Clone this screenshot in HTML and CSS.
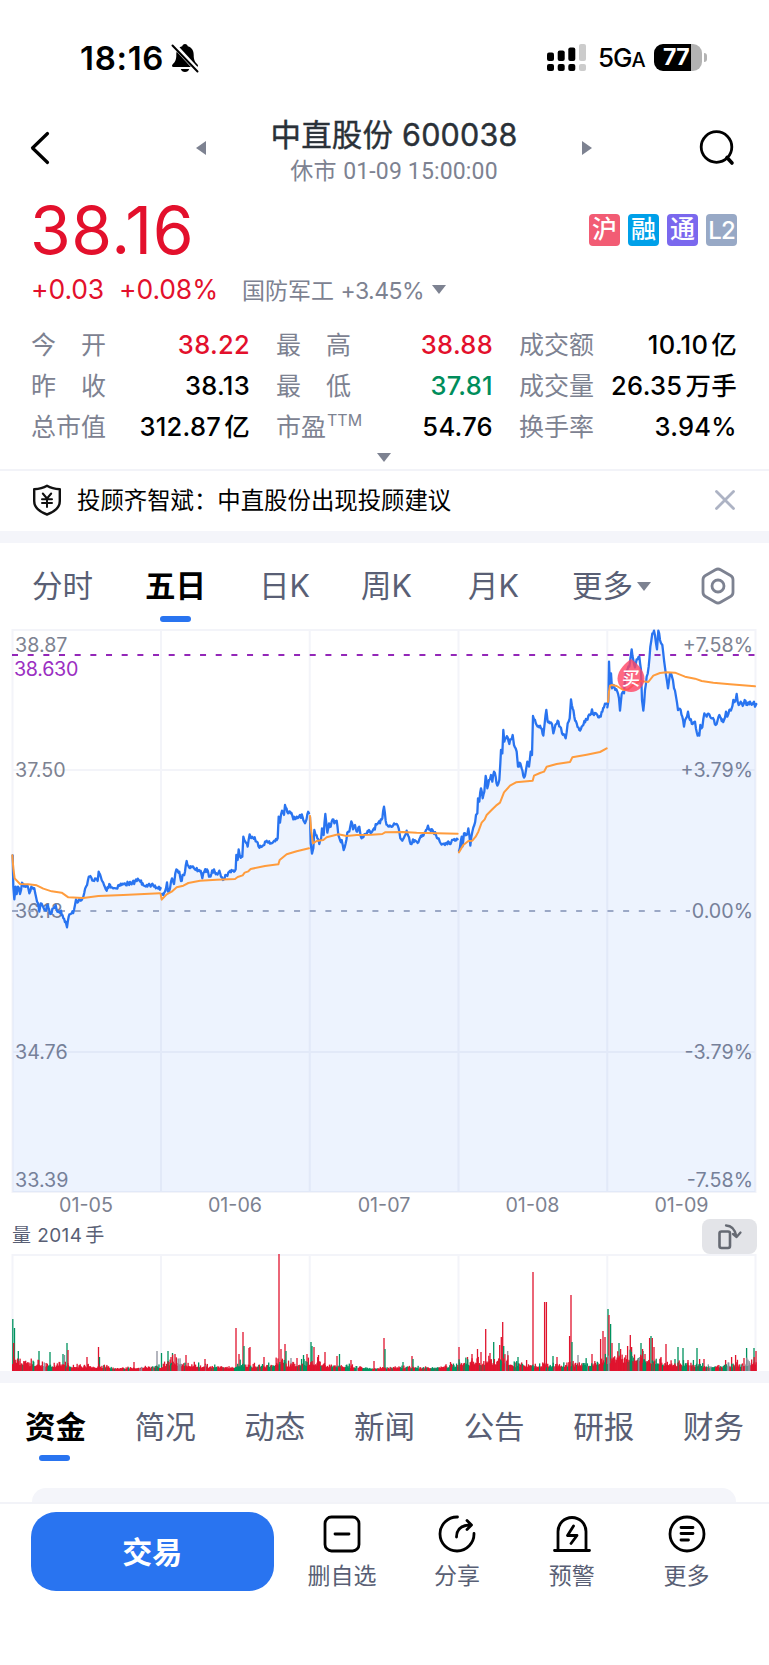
FILE: index.html
```html
<!DOCTYPE html>
<html lang="zh-CN">
<head>
    <meta charset="UTF-8">
    <meta name="viewport" content="width=device-width, initial-scale=1.0">
    <title>中直股份 600038</title>
    <link rel="stylesheet" href="styles.css">
</head>
<body>

    <div class="status-bar">
        <span class="clock">18:16</span>
        <svg class="bell" width="28" height="30" viewBox="0 0 28 30">
            <path d="M14 1c-1.600 0-2.600 1-2.800 2.300C7 4.500 5.300 8 5.300 12c0 5-1.300 7-3.800 9.500-1 1.200-.5 2.500 1 2.500h23c1.500 0 2-1.300 1-2.500C24 19 22.700 17 22.700 12c0-4-1.700-7.500-5.900-8.700C16.600 2 15.600 1 14 1z"/>
            <path d="M9.800 26h8.400c-.5 1.900-2.200 3-4.200 3s-3.700-1.100-4.200-3z"/>
            <path d="M2.500 1.500L27 28" stroke="#fff" stroke-width="5"/>
            <path d="M1.500 2.500L26.500 28.500" stroke="#000" stroke-width="2" stroke-linecap="round"/>
        </svg>
        <svg class="signal" width="40" height="28" viewBox="0 0 40 28">
            <rect x="0" y="8.500" width="7" height="8.500" rx="2"/>
            <rect x="10.700" y="6.500" width="7" height="10.500" rx="2"/>
            <rect x="21.300" y="3.500" width="7" height="13.500" rx="2"/>
            <rect x="32" y="0" width="7" height="17" rx="2" fill="#ccc"/>
            <rect x="0" y="20" width="7" height="7" rx="2"/>
            <rect x="10.700" y="20" width="7" height="7" rx="2"/>
            <rect x="21.300" y="20" width="7" height="7" rx="2"/>
            <rect x="32" y="20" width="7" height="7" rx="2" fill="#ccc"/>
        </svg>
        <span class="network">5G<small>A</small></span>
        <div class="battery"><span>77</span></div>
        <i class="battery-tip"></i>
    </div>

    <div class="header">
        <svg class="back" width="20" height="34" viewBox="0 0 20 34"><path d="M17.500 2.500L2.500 17l15 14.500" fill="none" stroke="#000" stroke-width="3.200" stroke-linecap="round" stroke-linejoin="round"/></svg>
        <svg class="prev" width="10" height="14" viewBox="0 0 10 14"><path d="M10 0v14L0 7z" fill="#7d8291"/></svg>
        <div class="title">
            <h1>中直股份 600038</h1>
            <p>休市 <span>01-09 15:00:00</span></p>
        </div>
        <svg class="next" width="10" height="14" viewBox="0 0 10 14"><path d="M0 0v14l10-7z" fill="#7d8291"/></svg>
        <svg class="search" width="38" height="38" viewBox="0 0 38 38" fill="none" stroke="#000" stroke-width="2.800" stroke-linecap="round"><circle cx="17.500" cy="18" r="15.300"/><path d="M28 28.500l5 5.500" stroke-width="3.600"/></svg>
    </div>

    <div class="quote">
        <div class="price-row">
            <span class="price">38.16</span>
            <div class="tags">
                <span class="tag hu">沪</span>
                <span class="tag rong">融</span>
                <span class="tag tong">通</span>
                <span class="tag l2">L2</span>
            </div>
        </div>
        <div class="change-row">
            <span class="change">+0.03</span>
            <span class="change percent">+0.08%</span>
            <span class="sector">国防军工 <em>+3.45%</em></span>
            <i class="arrow-down"></i>
        </div>
        <div class="stats">
            <div><span>今<b></b>开</span><strong class="up">38.22</strong></div>
            <div><span>最<b></b>高</span><strong class="up">38.88</strong></div>
            <div><span>成交额</span><strong>10.10<u>亿</u></strong></div>
            <div><span>昨<b></b>收</span><strong>38.13</strong></div>
            <div><span>最<b></b>低</span><strong class="down">37.81</strong></div>
            <div><span>成交量</span><strong>26.35<u>万手</u></strong></div>
            <div><span>总市值</span><strong>312.87<u>亿</u></strong></div>
            <div><span>市盈<sup>TTM</sup></span><strong>54.76</strong></div>
            <div><span>换手率</span><strong>3.94%</strong></div>
        </div>
        <i class="arrow-down expand"></i>
    </div>

    <div class="notice">
        <svg width="30" height="32" viewBox="0 0 30 32" fill="none" stroke="#111" stroke-width="2.400" stroke-linejoin="round" stroke-linecap="round">
            <path d="M15 1.800C19 4.200 23 5 27.800 5.200V17c0 6-4.500 10.500-12.800 13.500C6.700 27.500 2.200 23 2.200 17V5.200C7 5 11 4.200 15 1.800z"/>
            <path d="M10.800 9.500l4.200 5 4.200-5M10 15.200h10M10 19h10M15 14.500v8.500" stroke-width="2"/>
        </svg>
        <span>投顾齐智斌：中直股份出现投顾建议</span>
        <svg class="close" width="20" height="20" viewBox="0 0 20 20"><path d="M1.500 1.500l17 17M18.500 1.500l-17 17" stroke="#adb3c4" stroke-width="2.800" stroke-linecap="round"/></svg>
    </div>

    <div class="band"></div>

    <div class="chart-tabs">
        <span>分时</span>
        <span class="active">五日</span>
        <span>日K</span>
        <span>周K</span>
        <span>月K</span>
        <span class="more">更多<i class="arrow-down"></i></span>
        <svg width="36" height="38" viewBox="0 0 36 38" fill="none" stroke="#7d8291" stroke-width="2.800" stroke-linejoin="round"><path d="M15.500 2.700q2.500-1.400 5 0l10 5.800q2.500 1.400 2.500 4.300v12.400q0 2.900-2.500 4.300l-10 5.800q-2.500 1.400-5 0l-10-5.800Q3 28.100 3 25.200V12.800q0-2.900 2.500-4.300z"/><circle cx="18" cy="19" r="6"/></svg>
    </div>

    <svg id="price-chart" width="769" height="595" viewBox="0 625 769 595">
        <g class="grid">
            <path d="M12.500 630H755.500V1192H12.500zM12.500 770H755M12.500 1052H755M161 630V1192M309.700 630V1192M458.500 630V1192M607.300 630V1192"/>
        </g>
        <g class="axis">
            <text x="15" y="651.500">38.87</text>
            <text x="15" y="777">37.50</text>
            <text x="15" y="918">36.13</text>
            <text x="15" y="1059">34.76</text>
            <text x="15" y="1187">33.39</text>
            <text x="14" y="676" class="cost">38.630</text>
        </g>
        <g class="axis end">
            <text x="753" y="651.500">+7.58%</text>
            <text x="753" y="777">+3.79%</text>
            <text x="753" y="918">0.00%</text>
            <text x="753" y="1059">-3.79%</text>
            <text x="753" y="1187">-7.58%</text>
        </g>
        <g class="axis middle">
            <text x="86" y="1212">01-05</text>
            <text x="235" y="1212">01-06</text>
            <text x="384" y="1212">01-07</text>
            <text x="532.500" y="1212">01-08</text>
            <text x="681.500" y="1212">01-09</text>
        </g>
        <path class="dash zero" d="M12 911H690"/>
        <path class="dash cost-line" d="M12 655H755"/>
        <g id="series"></g>
        <path d="M631 659c4 3 13.500 10.500 13.500 19.500a13.500 13.500 0 0 1-27 0c0-9 9.500-16.500 13.500-19.500z" fill="#ff4463" fill-opacity=".8"/>
        <text class="buy" x="631" y="684.500">买</text>
    </svg>

    <div class="volume-head">
        <span>量 2014<u>手</u></span>
        <div class="rotate">
            <svg width="26" height="26" viewBox="0 0 26 26" fill="none" stroke="#666a73" stroke-width="2.600" stroke-linecap="round" stroke-linejoin="round"><rect x="2.500" y="7.500" width="10.500" height="16.500" rx="2"/><path d="M9 1.500c6 0 9 4 10.500 11M16 10l3.600 3L23.500 8.500" stroke-width="2.300"/></svg>
        </div>
    </div>
    <svg id="volume-chart" width="769" height="117" viewBox="0 1254 769 117">
        <path class="grid" d="M12.500 1371V1255H755.500V1371M161 1255V1371M309.700 1255V1371M458.500 1255V1371M607.300 1255V1371"/>
        <g id="volume"></g>
    </svg>

    <div class="band"></div>

    <div class="info-tabs">
        <span class="active">资金</span>
        <span>简况</span>
        <span>动态</span>
        <span>新闻</span>
        <span>公告</span>
        <span>研报</span>
        <span>财务</span>
    </div>
    <div class="card"></div>

    <div class="footer">
        <button>交易</button>
        <div class="action">
            <svg viewBox="0 0 38 38"><rect x="2" y="2" width="34" height="34" rx="6.500"/><path d="M12 19h14"/></svg>
            <span>删自选</span>
        </div>
        <div class="action">
            <svg viewBox="0 0 38 38"><path d="M19.500 2A17 17 0 1 0 36 18.500"/><path d="M18.500 22c0-7 4-11.500 13-12M29 5.500l4.500 4.500-4.500 4.500"/></svg>
            <span>分享</span>
        </div>
        <div class="action">
            <svg viewBox="0 0 38 38"><path d="M1.500 35.500h35M5 35V16.500a14 14 0 0 1 28 0V35M20.500 11l-6 9.500h9.500L18 28.500"/></svg>
            <span>预警</span>
        </div>
        <div class="action">
            <svg viewBox="0 0 38 38"><circle cx="19" cy="19" r="17"/><path d="M13 12.500h12M13 18.500h12M13 25h7.500"/></svg>
            <span>更多</span>
        </div>
    </div>

    <script src="chart.js"></script>
</body>
</html>
```
FILE: styles.css
```css
body {
    width: 769px;
    height: 1665px;
    margin: 0;
    overflow: hidden;
    background: #fff;
    color: #000;
    font-family: Inter, "Noto Sans CJK SC", sans-serif;
}

svg {
    display: block;
    flex-shrink: 0;
}

i, em {
    font-style: normal;
}

u {
    text-decoration: none;
    margin-left: 3px;
}

.status-bar {
    display: flex;
    align-items: center;
    height: 100px;
    padding: 15px 62px 0 80px;
    box-sizing: border-box;
}

.clock {
    width: 91px;
    font-size: 33px;
    font-weight: 600;
    letter-spacing: .7px;
}

.signal {
    margin-left: auto;
}

.network {
    width: 56px;
    margin-left: 11px;
    box-sizing: border-box;
    font-size: 26px;
    font-weight: 500;
    letter-spacing: -1px;
    white-space: nowrap;
}

.network small {
    font-size: 20px;
}

.battery {
    width: 48px;
    height: 27px;
    border-radius: 9px;
    background: linear-gradient(to right, #000 77%, #b3b3b3 77%);
    color: #fff;
    font-size: 23px;
    font-weight: 700;
    line-height: 27px;
}

.battery span {
    padding-left: 9px;
    letter-spacing: -.5px;
}

.battery-tip {
    width: 3px;
    height: 9px;
    margin-left: 2px;
    border-radius: 0 4px 4px 0;
    background: #b3b3b3;
}

.header {
    display: flex;
    align-items: center;
    height: 96px;
    padding: 0 32px 0 30px;
}

.prev {
    margin-left: 146px;
}

.title {
    width: 376px;
    text-align: center;
    padding-top: 10px;
}

.title h1 {
    margin: 0;
    font-size: 30.500px;
    font-weight: 400;
    line-height: 37px;
    letter-spacing: .2px;
    color: #2a3138;
    -webkit-text-stroke: .4px #2a3138;
}

.title p {
    margin: 0;
    font-size: 23px;
    line-height: 37px;
    letter-spacing: .15px;
    color: #7d8291;
}

.title p span {
    font-family: Roboto, sans-serif;
}

.search {
    margin-left: auto;
}

.quote {
    height: 273px;
    padding: 0 32px 0 31px;
}

.price-row {
    display: flex;
    align-items: center;
    justify-content: space-between;
    height: 68px;
}

.price {
    margin-left: -1px;
    font-size: 66px;
    line-height: 66px;
    letter-spacing: .6px;
    color: #e3102c;
}

.tags {
    display: flex;
    gap: 8px;
}

.tag {
    width: 31px;
    height: 32px;
    border-radius: 4px;
    color: #fff;
    font-size: 25px;
    font-weight: 500;
    line-height: 31px;
    text-align: center;
}

.hu { background: #f25c74; }
.rong { background: #00a0e9; }
.tong { background: #7a68ee; }
.l2 {
    background: #98a9c6;
    font-size: 24px;
    line-height: 33px;
    letter-spacing: -1px;
}

.change-row {
    display: flex;
    align-items: center;
    height: 38px;
    margin-top: 6px;
    padding-bottom: 2px;
}

.change {
    width: 88px;
    color: #e3102c;
    font-size: 26.500px;
    letter-spacing: -.1px;
}

.percent {
    width: 123px;
}

.sector {
    padding-bottom: 1px;
    color: #7d8291;
    font-size: 23px;
}

.sector em {
    letter-spacing: -.5px;
}

.arrow-down {
    width: 0;
    height: 0;
    margin-left: 8px;
    border: 7px solid transparent;
    border-top: 9px solid #7d8291;
    border-bottom: 0;
}

.expand {
    display: block;
    margin: 6px auto 0;
}

.stats {
    display: grid;
    grid-template-columns: 219px 217px 218px;
    column-gap: 26px;
    grid-auto-rows: 41px;
    margin-top: 14px;
}

.stats div {
    display: flex;
    justify-content: space-between;
    align-items: baseline;
    line-height: 41px;
    white-space: nowrap;
}

.stats span {
    color: #7d8291;
    font-size: 25px;
}

.stats span b {
    display: inline-block;
    width: 25px;
}

.stats sup {
    font-size: 16px;
    line-height: 0;
    vertical-align: 10px;
    margin-left: 1px;
}

.stats strong {
    font-size: 25.500px;
    font-weight: 500;
    letter-spacing: .3px;
}

.stats .up { color: #e3102c; }
.stats .down { color: #008d5b; }

.notice {
    display: flex;
    align-items: center;
    height: 60px;
    padding: 0 34px 0 32px;
    border-top: 2px solid #f2f3f8;
    font-size: 23.400px;
}

.notice svg {
    margin-bottom: 3px;
}

.notice span {
    margin-left: 15px;
    padding-bottom: 4px;
}

.notice .close {
    margin-left: auto;
}

.band {
    height: 12px;
    background: #f4f5fa;
}

.chart-tabs {
    display: grid;
    grid-template-columns: 113px 114px 102px 107px 104px 128px auto;
    align-items: center;
    height: 82px;
    padding-left: 32px;
    padding-top: 4px;
    box-sizing: border-box;
    font-size: 30.500px;
    color: #595f75;
    line-height: 78px;
}

.active {
    position: relative;
    color: #000;
    font-weight: 700;
}

.active::after {
    content: "";
    position: absolute;
    left: 15px;
    bottom: 3px;
    width: 31px;
    height: 6px;
    border-radius: 3px;
    background: #2974f0;
}

.more {
    display: flex;
    align-items: center;
}

.more .arrow-down {
    margin-left: 4px;
}

.grid {
    fill: none;
    stroke: #f3f4f9;
    stroke-width: 2;
}

.axis {
    font-size: 19.700px;
    fill: #7d8291;
}

.end { text-anchor: end; }
.middle { text-anchor: middle; }

.axis .cost {
    fill: #9b2fc2;
    letter-spacing: -.3px;
}

.dash {
    stroke-width: 2;
    stroke-dasharray: 6 9.670;
}

.zero { stroke: #a6adc2; }
.cost-line { stroke: #9327b8; }

.area { fill: rgba(41, 116, 240, .085); }

.line, .average {
    fill: none;
    stroke: #2974f0;
    stroke-width: 2.300;
    stroke-linejoin: round;
    stroke-linecap: round;
}

.average {
    stroke: #ff9c3d;
    stroke-width: 2;
}

.buy {
    fill: #fff;
    font-size: 18px;
    font-weight: 500;
    text-anchor: middle;
}

.volume-head {
    display: flex;
    justify-content: space-between;
    height: 34px;
    padding: 0 12px;
    color: #595f75;
    font-size: 19px;
    line-height: 31px;
    letter-spacing: .4px;
}

.rotate {
    display: flex;
    align-items: center;
    justify-content: center;
    width: 55px;
    height: 35px;
    margin-top: -1px;
    border-radius: 8px;
    background: #e3e4e8;
}

.info-tabs {
    display: flex;
    justify-content: space-between;
    height: 82px;
    padding: 0 25px 0 25px;
    color: #595f75;
    font-size: 30.500px;
    line-height: 87px;
}

.info-tabs .active::after {
    left: 14px;
    bottom: 4px;
}

.card {
    height: 14px;
    margin: 23px 33px 0 32px;
    border-radius: 14px 14px 0 0;
    background: #f4f5fa;
}

.footer {
    display: flex;
    height: 161px;
    padding: 8px 25px 0 31px;
    border-top: 2px solid #f2f3f8;
}

.footer button {
    width: 243px;
    height: 79px;
    margin-right: 11px;
    padding: 0 0 4px;
    border: none;
    border-radius: 25px;
    background: #2974f0;
    color: #fff;
    font-family: inherit;
    font-size: 30px;
    font-weight: 700;
}

.action {
    width: 115px;
    padding-top: 3px;
    text-align: center;
    color: #595f75;
    font-size: 23px;
    line-height: 46px;
}

.action svg {
    width: 38px;
    height: 38px;
    margin: 0 auto;
    fill: none;
    stroke: #000;
    stroke-width: 2.800;
    stroke-linecap: round;
    stroke-linejoin: round;
}
```
FILE: chart.js
```js
// Each trading day: origin of its points, then price and average (3 units = 1px)
const days = [
    {
        x: 0, y: 620,
        price: '38,706 40,800 43,838 47,800 50,822 54,800 60,822 66,788 72,800 82,795 88,820 94,800 103,805 108,830 114,850 118,875 122,850 130,862 138,872 143,855 152,882 160,865 167,855 172,875 183,872 190,895 197,905 201,922 206,890 215,880 222,870 228,838 235,845 245,840 250,830 258,800 264,780 271,768 277,782 285,775 293,783 296,755 305,780 312,795 320,812 328,792 337,803 347,805 357,795 370,793 385,790 395,793 405,783 416,780 428,790 440,795 452,800 460,797 470,803 482,804',
        average: '37,706 40,745 44,775 60,792 85,793 110,796 130,806 155,814 185,818 205,832 250,834 295,828 370,825 480,820'
    },
    {
        x: 150, y: 780,
        price: '34,345 40,345 45,335 48,325 51,307 54,335 60,325 66,295 72,312 76,280 82,270 88,275 93,303 100,285 105,275 110,243 117,262 125,262 132,265 138,270 147,270 152,272 157,295 163,275 171,268 177,290 184,282 192,268 200,280 208,272 213,290 219,300 226,285 232,288 238,275 245,270 252,275 257,268 259,225 263,240 266,208 270,230 277,230 280,170 286,185 293,200 299,163 306,170 314,172 320,185 328,203 336,200 345,185 355,188 365,190 373,182 383,175 386,110 390,128 396,92 402,105 405,75 412,97 424,98 430,118 440,110 450,105 458,112 465,130 472,103 477,100',
        average: '32,343 35,359 50,343 65,335 80,322 100,317 115,309 150,302 200,299 255,297 263,291 278,286 284,278 295,274 302,267 345,258 385,253 389,240 410,223 440,214 477,205'
    },
    {
        x: 150, y: 780,
        price: '480,110 482,190 486,221 490,205 493,150 497,165 502,175 508,192 513,180 516,145 521,165 526,102 529,130 532,158 537,130 542,140 548,118 553,130 560,122 565,165 570,180 575,180 581,210 587,190 592,158 598,155 604,124 609,148 615,135 622,155 628,140 632,168 640,172 648,162 655,155 664,158 672,145 682,132 690,130 697,115 702,80 707,122 712,135 722,138 732,130 740,132 746,145 751,175 757,182 764,168 770,152 777,172 782,192 789,178 800,185 808,178 815,170 823,158 828,150 834,137 840,148 850,155 858,165 866,175 872,190 880,192 890,188 897,187 902,192 906,180 915,182 923,178',
        average: '480,108 484,155 489,190 500,183 520,180 530,172 565,163 590,168 620,165 665,164 697,162 705,157 760,156 800,158 923,161'
    },
    {
        x: 440, y: 620,
        price: '57,693 62,665 65,650 67,680 72,640 80,645 85,625 88,645 91,677 97,635 103,615 108,585 112,580 114,535 118,545 123,505 128,535 133,515 137,468 142,505 147,480 153,465 157,485 162,455 167,470 172,497 178,480 181,430 183,390 187,400 190,330 193,365 198,355 203,352 208,372 213,358 218,345 222,375 227,385 230,395 234,440 241,430 245,445 252,473 258,450 262,425 267,440 272,395 276,405 279,288 285,300 290,315 295,318 303,325 310,347 314,310 319,270 323,305 330,310 336,312 340,340 346,315 353,302 360,320 366,340 373,345 377,355 383,310 389,295 393,238 398,265 403,290 410,310 418,330 425,320 433,303 440,300 450,285 456,268 462,285 472,285 480,288 487,275 492,262 498,252 502,250',
        average: '57,697 70,675 85,663 97,662 107,650 115,635 125,608 134,598 140,585 157,568 168,557 180,548 192,517 210,497 228,487 278,482 282,467 300,459 312,455 320,440 350,432 390,426 397,412 440,404 480,396 500,385'
    },
    {
        x: 440, y: 620,
        price: '502,262 505,245 507,125 510,200 513,160 516,205 521,195 526,210 532,215 537,235 540,272 545,222 552,220 556,170 562,150 568,140 575,88 580,120 585,142 590,118 598,110 603,150 606,240 610,272 615,210 620,170 626,140 631,80 637,40 642,32 648,70 651,88 655,32 660,60 667,75 672,120 678,165 684,205 690,160 696,170 702,205 708,230 714,270 722,270 732,320 738,295 744,275 750,300 758,312 765,305 773,347 778,347 781,315 787,322 793,280 800,290 808,283 816,295 822,300 827,315 833,300 838,285 845,303 852,300 858,275 862,290 868,270 875,265 880,240 885,245 890,222 896,255 902,245 908,258 914,240 922,255 930,245 937,253 942,245 945,260 949,252',
        average: '504,246 507,215 510,197 516,195 530,198 550,210 565,208 580,195 600,183 625,186 640,167 660,159 680,157 705,158 735,170 765,176 785,183 820,188 870,193 945,199'
    }
];

let seed = 7;
function random() {
    seed = (seed * 16807) % 2147483647;
    return seed / 2147483647;
}

function parse(day, text) {
    return text.split(' ').map(p => {
        const [x, y] = p.split(',').map(Number);
        return [day.x + x / 3, day.y + y / 3];
    });
}

function ticks(points) {
    const out = [points[0]];
    for (let i = 1; i < points.length; i++) {
        const [x0, y0] = points[i - 1];
        const [x1, y1] = points[i];
        const n = Math.floor((x1 - x0) / 0.75);
        for (let k = 1; k < n; k++) {
            const t = k / n;
            out.push([x0 + (x1 - x0) * t, y0 + (y1 - y0) * t + (random() - 0.5) * 4.5]);
        }
        out.push(points[i]);
    }
    return out;
}

function toPath(points) {
    return 'M' + points.map(p => p[0].toFixed(2) + ' ' + p[1].toFixed(2)).join('L');
}

const prices = days.map(day => ticks(parse(day, day.price)));
let series = `<path class="area" d="${toPath(prices.flat())}L755.5 704V1192H12.5Z"/>`;
days.forEach((day, i) => {
    series += `<path class="line" d="${toPath(prices[i])}"/>`;
    series += `<path class="average" d="${toPath(parse(day, day.average))}"/>`;
});
document.getElementById('series').innerHTML = series;

// Volume: usual level along the axis, then the spikes
const level = [[12, 18], [25, 13], [40, 10], [60, 9], [80, 7], [105, 6], [115, 3], [140, 4], [160, 6], [170, 15], [185, 11], [200, 7], [230, 4], [240, 10], [262, 6], [280, 15], [287, 10], [305, 12], [318, 15], [325, 9], [350, 6], [370, 3], [400, 5], [420, 4], [450, 7], [465, 13], [490, 16], [505, 19], [515, 9], [550, 7], [575, 11], [600, 13], [615, 25], [635, 22], [655, 18], [665, 13], [690, 10], [710, 6], [740, 10], [757, 16]];
const spikes = '12.8,52,g 14.5,43,g 13.7,28,r 18.3,20,g 39,20,g 50,19,g 63,17,g 64.5,16,n 67,28,g 68,21,r 87,14,r 98.5,24,r 99.5,14,g 134,9,r 157,20,n 161.5,18,g 168,20,g 172.5,18,g 175,17,r 171,14,r 186,16,r 205,12,r 236,43,r 239,17,r 243,39,r 244,25,g 250,24,r 249,23,r 264,14,r 279,117,r 281,22,r 285,27,r 286,20,g 291,13,n 297,13,r 303.5,16,g 307,17,r 311,29,g 312,25,g 314,24,r 318.5,16,r 325,19,r 337,15,r 339.5,17,g 351,11,r 374,10,r 384,33,r 385,22,g 403,9,g 412,15,r 413,12,g 450.5,9,r 459,24,r 467.5,14,r 472,17,r 477.5,22,r 481,19,r 485.7,42,r 490,18,r 493.7,29,g 499.7,26,r 501.3,34,r 502.7,49,r 503.7,25,g 507.7,20,n 518,14,g 526.6,11,r 533,99,r 544.6,69,r 546.4,69,r 553,15,g 557,14,r 569.6,35,r 571,76,r 572,29,g 578,16,n 592,17,r 600.6,32,r 603,40,r 605,34,r 608,62,g 609,56,r 610.6,47,g 612,28,r 619,28,g 620.6,22,r 627.6,25,r 630.3,36,r 631.6,24,r 641,28,g 643,20,g 645,17,r 649.6,33,r 651,35,g 652.3,33,r 654,24,r 661,14,r 666,27,r 675,12,g 678,24,g 683,23,g 688,11,r 697,23,g 699.6,12,r 704,12,r 725.6,11,r 731.6,14,r 735.6,16,r 744,13,r 746.6,23,g 754,23,g 756,20,r';
const colors = { r: '#e0142e', g: '#00925f', n: '#8d909b' };

function levelAt(x) {
    for (let i = 1; i < level.length; i++) {
        if (x <= level[i][0]) {
            const [x0, h0] = level[i - 1];
            const [x1, h1] = level[i];
            return h0 + (h1 - h0) * (x - x0) / (x1 - x0);
        }
    }
    return level[level.length - 1][1];
}

function bar(x, h, type) {
    return `<rect x="${x.toFixed(2)}" y="${(1371 - h).toFixed(2)}" width="1.3" height="${h.toFixed(2)}" fill="${colors[type]}"/>`;
}

let volume = '';
spikes.split(' ').forEach(s => {
    const [x, h, type] = s.split(',');
    volume += bar(x - 0.65, Number(h), type);
});
let type = 'r';
for (let x = 12; x < 756; x += 0.62) {
    // neighbouring minutes tend to keep their direction
    if (random() < 0.45) {
        const r = random();
        type = r < 0.64 ? 'r' : r < 0.96 ? 'g' : 'n';
    }
    volume += bar(x, 1 + levelAt(x) * (0.3 + 0.8 * random() * random()), type);
}
document.getElementById('volume').innerHTML = volume;
```
